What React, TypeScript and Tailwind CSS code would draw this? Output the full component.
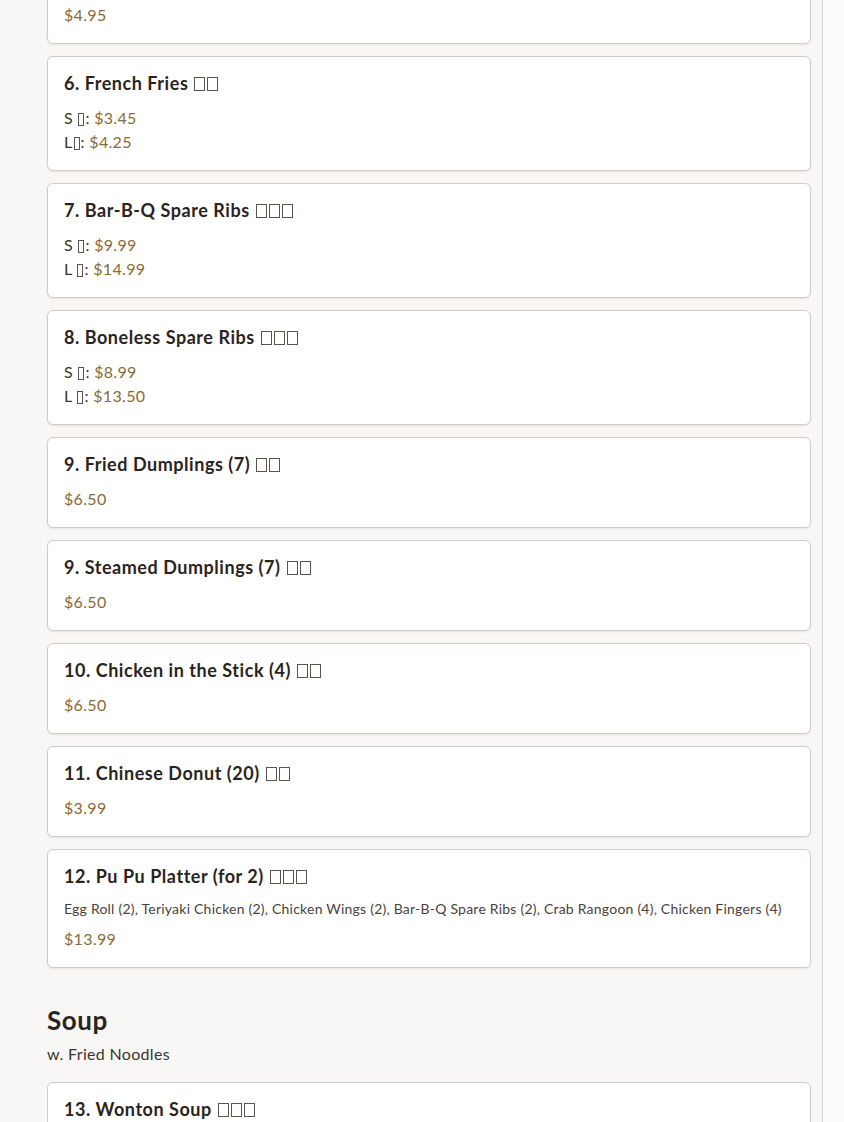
type Item = { name: string; tofu: number; desc?: string; prices: { label?: string; value: string }[] };

const items: Item[] = [
  { name: "6. French Fries", tofu: 2, prices: [{ label: "S ", value: "$3.45" }, { label: "L", value: "$4.25" }] },
  { name: "7. Bar-B-Q Spare Ribs", tofu: 3, prices: [{ label: "S ", value: "$9.99" }, { label: "L ", value: "$14.99" }] },
  { name: "8. Boneless Spare Ribs", tofu: 3, prices: [{ label: "S ", value: "$8.99" }, { label: "L ", value: "$13.50" }] },
  { name: "9. Fried Dumplings (7)", tofu: 2, prices: [{ value: "$6.50" }] },
  { name: "9. Steamed Dumplings (7)", tofu: 2, prices: [{ value: "$6.50" }] },
  { name: "10. Chicken in the Stick (4)", tofu: 2, prices: [{ value: "$6.50" }] },
  { name: "11. Chinese Donut (20)", tofu: 2, prices: [{ value: "$3.99" }] },
  {
    name: "12. Pu Pu Platter (for 2)",
    tofu: 3,
    desc: "Egg Roll (2), Teriyaki Chicken (2), Chicken Wings (2), Bar-B-Q Spare Ribs (2), Crab Rangoon (4), Chicken Fingers (4)",
    prices: [{ value: "$13.99" }],
  },
];

// missing-glyph boxes, as the CJK names show in the reference
function Tofu({ n }: { n: number }) {
  return (
    <span className="inline-flex gap-[2px] ml-[6px] align-[-1px]">
      {Array.from({ length: n }).map((_, i) => (
        <span key={i} className="inline-block w-[11px] h-[14px] border border-[#5a5350]" />
      ))}
    </span>
  );
}

function SmallTofu() {
  return <span className="inline-block w-[6px] h-[13px] border border-[#5a5350] align-[-2px] mx-[1px]" />;
}

function Card({ name, tofu, desc, prices }: Item) {
  return (
    <div className="bg-white border border-[#cfcdca] rounded-md px-4 py-4 shadow-[0_1px_2px_rgba(0,0,0,0.08)]">
      <h3 className="text-[18px] leading-[21px] font-bold text-[#2a2421] tracking-[0.03em] mb-3">
        {name}
        <Tofu n={tofu} />
      </h3>
      {desc && <p className="text-[14px] leading-5 text-[#4a423d] tracking-[0.016em] mb-2">{desc}</p>}
      {prices.map((p, i) => (
        <div key={i} className="text-[16px] leading-6 tracking-[0.02em]">
          {p.label && (
            <span className="text-[#3b3430]">
              {p.label}
              <SmallTofu />:{" "}
            </span>
          )}
          <span className="text-[#8a6b36]">{p.value}</span>
        </div>
      ))}
    </div>
  );
}

export default function App() {
  return (
    <div
      className="w-[844px] h-[1122px] overflow-hidden flex bg-[#f8f7f5]"
      style={{ fontFamily: "Lato, 'Noto Sans', sans-serif" }}
    >
      <div className="w-[823px] border-r border-[#d6d4d1] pl-[47px] pr-[11px]">
        <div className="flex flex-col gap-3">
          {/* partially scrolled card */}
          <div className="-mt-[47px] bg-white border border-[#cfcdca] rounded-md px-4 py-4 shadow-[0_1px_2px_rgba(0,0,0,0.08)]">
            <h3 className="text-[18px] leading-[21px] font-bold text-[#2a2421] tracking-[0.03em] mb-3">
              5. Crab Rangoon (6)
              <Tofu n={3} />
            </h3>
            <div className="text-[16px] leading-6 tracking-[0.02em] text-[#8a6b36]">$4.95</div>
          </div>
          {items.map((it) => (
            <Card key={it.name} {...it} />
          ))}
        </div>

        <section className="mt-[36px]">
          <h2 className="text-[26px] leading-8 font-bold text-[#2a2421] tracking-[0.02em]">Soup</h2>
          <p className="text-[16px] leading-6 text-[#3b3430] tracking-[0.02em] mt-[6px] mb-4">w. Fried Noodles</p>
          <div className="bg-white border border-[#cfcdca] rounded-md px-4 py-4">
            <h3 className="text-[18px] leading-[21px] font-bold text-[#2a2421] tracking-[0.03em] mb-3">
              13. Wonton Soup
              <Tofu n={3} />
            </h3>
            <div className="text-[16px] leading-6 tracking-[0.02em] text-[#8a6b36]">$3.50</div>
          </div>
        </section>
      </div>
      <div className="flex-1 bg-[#fbfbfa]" />
    </div>
  );
}
